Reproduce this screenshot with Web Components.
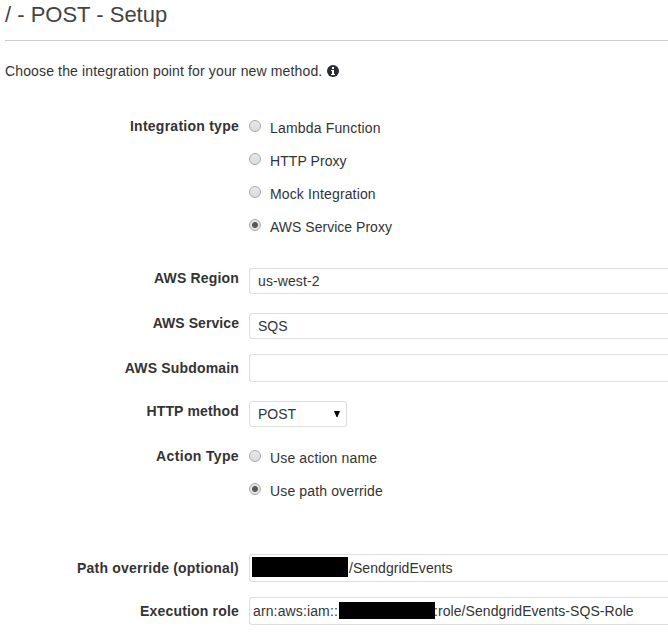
<!DOCTYPE html>
<html lang="en">
<head>
<meta charset="utf-8">
<title>Method setup</title>
<style>
html,body{margin:0;background:#fff;overflow:hidden}
body{width:668px;height:636px;font:14px "Liberation Sans",Arial,sans-serif;color:#333}
</style>
</head>
<body>
<setup-page>
  <page-heading>/ - POST - Setup</page-heading>
  <intro-line>Choose the integration point for your new method.</intro-line>
  <form-row label="Integration type" style="height:152px;--track:.25px">
    <radio-option style="--track:.17px">Lambda Function</radio-option>
    <radio-option style="--track:.07px">HTTP Proxy</radio-option>
    <radio-option>Mock Integration</radio-option>
    <radio-option checked style="--track:.02px">AWS Service Proxy</radio-option>
  </form-row>
  <form-row label="AWS Region" style="height:45px;--track:.17px"><text-field style="letter-spacing:.1px">us-west-2</text-field></form-row>
  <form-row label="AWS Service" style="height:41px;--track:.07px"><text-field>SQS</text-field></form-row>
  <form-row label="AWS Subdomain" low style="height:47px;--track:.17px"><text-field tall></text-field></form-row>
  <form-row label="HTTP method" style="height:45px;--track:.17px"><select-field>POST</select-field></form-row>
  <form-row label="Action Type" style="height:108px;--track:.35px">
    <radio-option>Use action name</radio-option>
    <radio-option checked>Use path override</radio-option>
  </form-row>
  <form-row label="Path override (optional)" low style="height:43px;--track:.2px"><text-field tall><redacted-part style="height:20px;margin:0 1px 0 -1px;top:-1px"></redacted-part><span style="letter-spacing:.06px">/SendgridEvents</span></text-field></form-row>
  <form-row label="Execution role" low style="height:39px;--track:.18px"><text-field tall><span style="width:86px;letter-spacing:.13px">arn:aws:iam::</span><redacted-part style="height:17px;top:-1px"></redacted-part><span style="margin-left:-1px;letter-spacing:.07px">:role/SendgridEvents-SQS-Role</span></text-field></form-row>
</setup-page>
<script>
function define(name, html) {
  customElements.define(name, class extends HTMLElement {
    constructor() {
      super();
      this.attachShadow({mode: 'open'}).innerHTML = html;
    }
    connectedCallback() {
      const label = this.shadowRoot.querySelector('.label');
      if (label) label.textContent = this.getAttribute('label');
    }
  });
}
define('page-heading', `<style>
:host{display:block;box-sizing:border-box;height:41px;margin-left:5px;padding-top:2px;border-bottom:1px solid #ccc;font-size:22px;line-height:26px;color:#444}
</style><slot></slot>`);
define('intro-line', `<style>
:host{display:flex;height:75px;box-sizing:border-box;padding:20px 0 0 5px;line-height:20px;letter-spacing:.14px}
svg{width:12px;height:12px;margin:4px 0 0 5px}
</style><span><slot></slot></span><svg viewBox="0 0 12 12"><circle cx="6" cy="6" r="6" fill="#2b2b33"/><path fill="#fff" d="M5 2h2v2H5zM4 5h3v4h1v1H4V9h1V6H4z"/></svg>`);
define('form-row', `<style>
:host{display:grid;grid-template-columns:239px 1fr;column-gap:10px;box-sizing:border-box}
.label{text-align:right;font-weight:bold;line-height:20px;letter-spacing:var(--track)}
:host([low]) .label{padding-top:4px}
::slotted(radio-option:not([style])){--track:.14px}
</style><div class="label"></div><div><slot></slot></div>`);
define('radio-option', `<style>
:host{display:flex;height:33px;line-height:20px}
i{box-sizing:border-box;width:12px;height:12px;margin:4px 9px 0 0;border:1px solid #aaa;border-radius:50%;background:linear-gradient(#e8e8e8,#dcdcdc)}
:host([checked]) i{background:radial-gradient(circle,#5a5a5a 0 2.6px,#e4e4e4 3.4px)}
span{padding-top:2px;letter-spacing:var(--track)}
</style><i></i><span><slot></slot></span>`);
define('text-field', `<style>
:host{display:flex;align-items:center;box-sizing:border-box;height:26px;padding-left:8px;border:1px solid #ddd;border-right:0;border-radius:3px 0 0 3px;white-space:pre}
:host([tall]){height:28px;padding-left:3px}
</style><slot></slot>`);
define('redacted-part', `<style>
:host{display:block;position:relative;flex:none;width:96px;background:#000}
</style>`);
define('select-field', `<style>
:host{display:flex;align-items:center;justify-content:space-between;box-sizing:border-box;width:98px;height:26px;padding:0 6px 0 8px;border:1px solid #ddd;border-radius:3px}
svg{width:6px;height:6px}
</style><span><slot></slot></span><svg viewBox="0 0 6 6"><path d="M0 0h6L3.5 6h-1z" fill="#000"/></svg>`);
define('setup-page', `<style>:host{display:flex;flex-direction:column;width:668px;height:636px}</style><slot></slot>`);
</script>
</body>
</html>
